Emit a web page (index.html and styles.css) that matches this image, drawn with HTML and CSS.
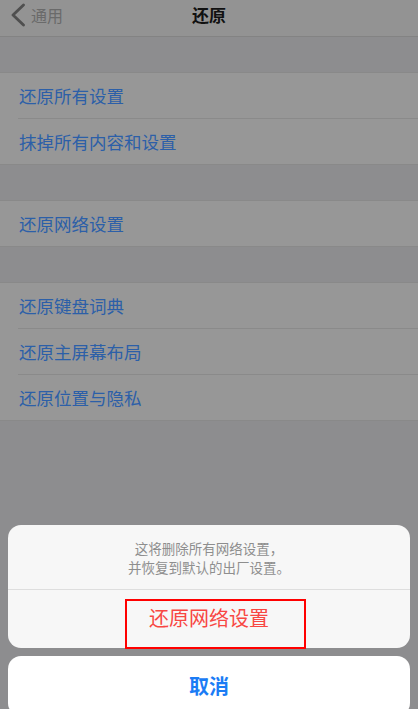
FILE: index.html
```html
<!DOCTYPE html>
<html lang="zh-CN">
  <head>
    <meta charset="UTF-8" />
    <meta name="viewport" content="width=device-width, initial-scale=1.0" />
    <title>还原</title>
    <link rel="stylesheet" href="styles.css">
  </head>

  <body>
    <div class="navbar">
      <div class="back">
        <svg class="chevron" width="14" height="24" viewBox="0 0 14 24">
          <polyline points="12.5,2 2,12 12.5,22" fill="none" stroke="#4f4f4f" stroke-width="2.8" stroke-linecap="round" stroke-linejoin="round" />
        </svg>
        <span>通用</span>
      </div>
      <div class="title">还原</div>
      <div></div>
    </div>

    <div class="group">
      <div class="row">还原所有设置</div>
      <div class="row">抹掉所有内容和设置</div>
    </div>

    <div class="group">
      <div class="row">还原网络设置</div>
    </div>

    <div class="group">
      <div class="row">还原键盘词典</div>
      <div class="row">还原主屏幕布局</div>
      <div class="row">还原位置与隐私</div>
    </div>

    <!-- action sheet over the dimmed list -->
    <div class="sheet">
      <div class="card">
        <div class="message">这将删除所有网络设置，<br />并恢复到默认的出厂设置。</div>
        <div class="action">
          还原网络设置
          <span class="highlight"></span>
        </div>
      </div>
      <div class="card cancel">取消</div>
    </div>
  </body>
</html>
```

FILE: styles.css
```css
* {
  box-sizing: border-box;
  font-family: "Noto Sans CJK SC", "Noto Sans", sans-serif;
}

body {
  margin: 0;
  width: 418px;
  height: 709px;
  overflow: hidden;
  background-color: #8d8d8f;
}

.navbar {
  display: grid;
  grid-template-columns: 1fr auto 1fr;
  align-items: start;
  height: 37px;
  background-color: #939393;
  border-bottom: 1px solid #838383;
}

.back {
  display: flex;
  align-items: center;
  gap: 6px;
  height: 30px;
  padding-left: 11px;
  color: #6a6a6a;
  font-size: 16px;
}

.title {
  height: 30px;
  line-height: 30px;
  font-size: 17px;
  font-weight: bold;
  color: #111111;
}

.group {
  margin-top: 35px;
  background-color: #979797;
  border-top: 1px solid #898989;
  border-bottom: 1px solid #898989;
}

.row {
  display: flex;
  align-items: center;
  height: 45px;
  margin-left: 18px;
  padding-left: 1px;
  padding-bottom: 1px;
  font-size: 17.5px;
  color: #2c5fa8;
}

.row + .row {
  height: 46px;
  border-top: 1px solid #8a8a8a;
}

.sheet {
  position: absolute;
  top: 525px;
  left: 8px;
  right: 8px;
  display: flex;
  flex-direction: column;
  gap: 8px;
}

.card {
  background-color: #f7f7f7;
  border-radius: 13px;
}

.message {
  height: 65px;
  padding-top: 14px;
  border-bottom: 1px solid #dedede;
  text-align: center;
  font-size: 13.5px;
  line-height: 19px;
  color: #8e8e8e;
}

.action {
  position: relative;
  height: 58px;
  line-height: 56px;
  text-align: center;
  font-size: 20px;
  color: #f84743;
}

.highlight {
  position: absolute;
  left: 117px;
  top: 9px;
  width: 181px;
  height: 50px;
  border: 2px solid #ff0000;
}

.cancel {
  height: 60px;
  line-height: 60px;
  background-color: #ffffff;
  text-align: center;
  font-size: 20px;
  font-weight: bold;
  color: #1b7cf5;
}
```
